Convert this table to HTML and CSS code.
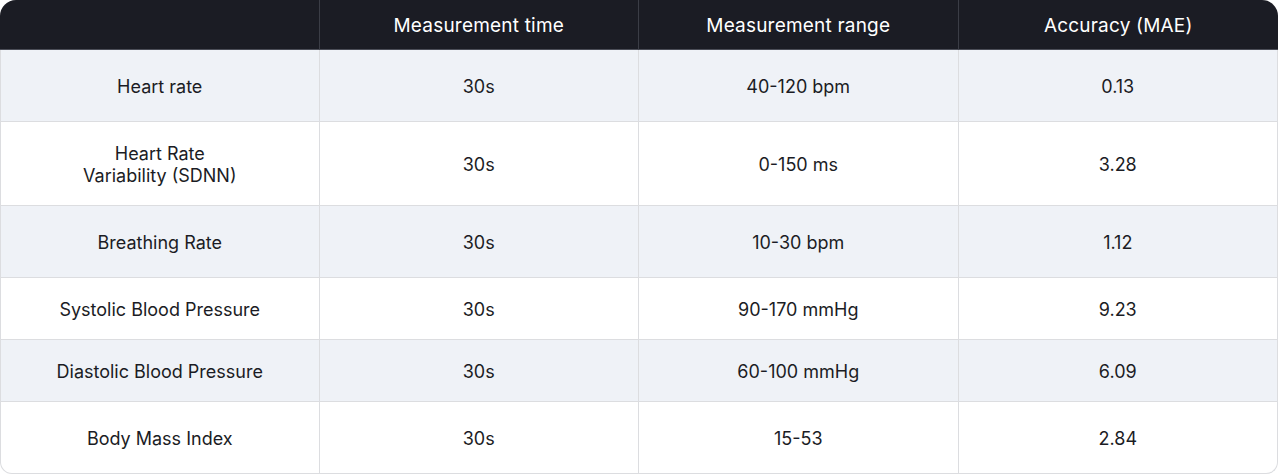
FILE: index.html
```html
<!DOCTYPE html>
<html>
<head>
<meta charset="utf-8">
<link rel="stylesheet" href="styles.css">
</head>
<body>
<table class="spec">
  <thead>
    <tr class="head">
      <th></th>
      <th>Measurement time</th>
      <th>Measurement range</th>
      <th>Accuracy (MAE)</th>
    </tr>
  </thead>
  <tbody>
    <tr class="r72 alt"><td>Heart rate</td><td>30s</td><td>40-120 bpm</td><td>0.13</td></tr>
    <tr class="r84"><td>Heart Rate<br>Variability (SDNN)</td><td>30s</td><td>0-150 ms</td><td>3.28</td></tr>
    <tr class="r72 alt"><td>Breathing Rate</td><td>30s</td><td>10-30 bpm</td><td>1.12</td></tr>
    <tr class="r62"><td>Systolic Blood Pressure</td><td>30s</td><td>90-170 mmHg</td><td>9.23</td></tr>
    <tr class="r62 alt"><td>Diastolic Blood Pressure</td><td>30s</td><td>60-100 mmHg</td><td>6.09</td></tr>
    <tr class="r72 last"><td>Body Mass Index</td><td>30s</td><td>15-53</td><td>2.84</td></tr>
  </tbody>
</table>
</body>
</html>
```
FILE: styles.css
```css
html, body {
  margin: 0;
  padding: 0;
  background: #ffffff;
}
.spec {
  width: 1278px;
  border-collapse: separate;
  border-spacing: 0;
  table-layout: fixed;
  font-family: Inter, "Open Sans", sans-serif;
  font-size: 18px;
  color: #1b1c24;
}
.spec th, .spec td {
  text-align: center;
  vertical-align: middle;
  padding: 2px 0 0 0;
  line-height: 22px;
}
.spec th {
  background: #1b1c24;
  color: #ffffff;
  font-weight: 400;
  font-size: 19px;
  letter-spacing: 0.2px;
  height: 49px;
  padding-top: 3px;
  box-sizing: border-box;
  border-bottom: 1px solid #4b4d57;
  border-right: 1px solid #3b3d46;
}
.spec th:last-child { border-right: none; border-top-right-radius: 16px; }
.spec th:first-child { border-top-left-radius: 16px; }
.spec td {
  box-sizing: border-box;
  border-bottom: 1px solid #dcdde0;
  border-right: 1px solid #dcdde0;
}
.spec td:first-child { border-left: 1px solid #dcdde0; }
.spec tr.alt td { background: #eff2f7; }
.r72 td { height: 72px; }
.r84 td { height: 84px; }
.r62 td { height: 62px; }
.spec thead th { height: 50px; }
.last td:first-child { border-bottom-left-radius: 12px; }
.last td:last-child { border-bottom-right-radius: 12px; }
```
